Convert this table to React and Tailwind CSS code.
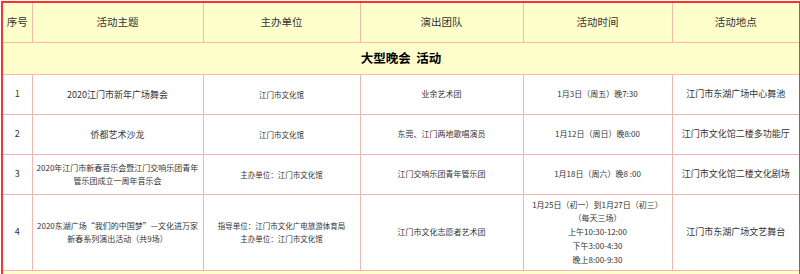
const cols = [30, 171, 157, 163, 149, 128];

const headers = ["序号", "活动主题", "主办单位", "演出团队", "活动时间", "活动地点"];

const rows = [
  {
    no: "1",
    topic: ["2020江门市新年广场舞会"],
    topicSize: "text-[9px]",
    host: ["江门市文化馆"],
    team: "业余艺术团",
    time: ["1月3日（周五）晚7:30"],
    place: "江门市东湖广场中心舞池",
    h: "h-[40px]",
  },
  {
    no: "2",
    topic: ["侨都艺术沙龙"],
    topicSize: "text-[9px]",
    host: ["江门市文化馆"],
    team: "东莞、江门两地歌唱演员",
    time: ["1月12日（周日）晚8:00"],
    place: "江门市文化馆二楼多功能厅",
    h: "h-[40px]",
  },
  {
    no: "3",
    topic: ["2020年江门市新春音乐会暨江门交响乐团青年", "管乐团成立一周年音乐会"],
    topicSize: "text-[8px]",
    host: ["主办单位：江门市文化馆"],
    team: "江门交响乐团青年管乐团",
    time: ["1月18日（周六）晚8 :00"],
    place: "江门市文化馆二楼文化剧场",
    h: "h-[40px]",
  },
  {
    no: "4",
    topic: ["2020东湖广场“我们的中国梦”—文化进万家", "新春系列演出活动（共9场）"],
    topicSize: "text-[8px]",
    host: ["指导单位：江门市文化广电旅游体育局", "主办单位：江门市文化馆"],
    team: "江门市文化志愿者艺术团",
    time: ["1月25日（初一）到1月27日（初三）", "（每天三场）", "上午10:30-12:00", "下午3:00-4:30", "晚上8:00-9:30"],
    place: "江门市东湖广场文艺舞台",
    h: "h-[76px]",
  },
];

const cell = "border border-[#f5b4b0] text-center align-middle px-0 whitespace-nowrap";

export default function App() {
  return (
    <div className="w-[800px] h-[274px] overflow-hidden bg-white pt-px pl-px" style={{ fontFamily: '"Noto Sans CJK SC", "Noto Sans", sans-serif' }}>
      <table className="w-[798px] table-fixed border-collapse border-2 border-[#ff3030] text-[#333]">
        <colgroup>
          {cols.map((w, i) => (
            <col key={i} style={{ width: w }} />
          ))}
        </colgroup>
        <tbody>
          <tr className="bg-[#ffffcc]">
            {headers.map((h) => (
              <td key={h} className={`${cell} h-[40px] text-[10.5px] border-[#f8b8a4]`}>
                {h}
              </td>
            ))}
          </tr>
          <tr className="bg-[#ffffcc]">
            <td colSpan={6} className={`${cell} h-[32px] text-[12.5px] font-bold text-black border-[#f8b8a4]`}>
              大型晚会&nbsp;&nbsp;活动
            </td>
          </tr>
          {rows.map((r) => (
            <tr key={r.no} className="bg-white">
              <td className={`${cell} ${r.h} text-[9px]`}>{r.no}</td>
              <td className={`${cell} ${r.topicSize} leading-[13px]`}>
                {r.topic.map((t) => (
                  <div key={t}>{t}</div>
                ))}
              </td>
              <td className={`${cell} text-[7.5px] leading-[13px]`}>
                {r.host.map((t) => (
                  <div key={t}>{t}</div>
                ))}
              </td>
              <td className={`${cell} text-[8px]`}>{r.team}</td>
              <td className={`${cell} text-[8px] leading-[13.7px]`}>
                {r.time.map((t) => (
                  <div key={t}>{t}</div>
                ))}
              </td>
              <td className={`${cell} text-[9px]`}>{r.place}</td>
            </tr>
          ))}
          <tr className="bg-[#ffffcc]">
            <td colSpan={6} className={`${cell} h-[32px] border-[#f8b8a4]`}></td>
          </tr>
        </tbody>
      </table>
    </div>
  );
}
